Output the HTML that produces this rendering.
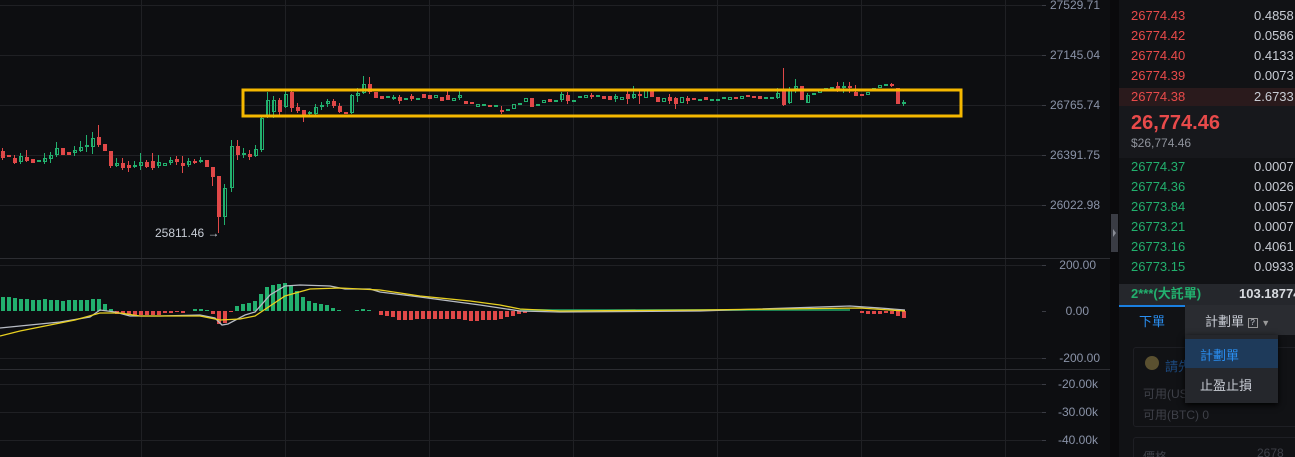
<!DOCTYPE html>
<html><head><meta charset="utf-8"><style>
*{margin:0;padding:0;box-sizing:border-box}
body{width:1295px;height:457px;overflow:hidden;background:#0d0e11;font-family:"Liberation Sans","Noto Sans CJK TC",sans-serif;position:relative}
.ax{position:absolute;left:1044px;width:56px;text-align:right;font-size:12px;color:#8a93a8;line-height:14px}
.ob{position:absolute;left:1119px;width:176px;background:#111215;top:0;height:457px;overflow:hidden}
.r{position:absolute;left:12px;font-size:13px;line-height:20px}
.q{position:absolute;left:135px;font-size:13px;line-height:20px;color:#c8ccd4}
.red{color:#e84a4a}.grn{color:#22b06e}
</style></head><body>
<svg width="1119" height="457" style="position:absolute;left:0;top:0">
<g stroke="#1f2024" stroke-width="1">
<path d="M141.5 0V457M285.5 0V457M429.5 0V457M573.5 0V457M717.5 0V457M861.5 0V457M1005.5 0V457"/>
<path d="M0 5.5H1042M0 55.5H1042M0 105.5H1042M0 155.5H1042M0 205.5H1042M0 265.5H1042M0 358.5H1042M0 384.5H1042M0 412.5H1042M0 440.5H1042"/>
</g>
<path d="M0 258.5H1110M0 369.5H1110" stroke="#2c2d32"/>
<g stroke="#3a3c44"><path d="M1042 5.5h4M1042 55.5h4M1042 105.5h4M1042 155.5h4M1042 205.5h4M1042 265.5h4M1042 311.5h4M1042 358.5h4M1042 384.5h4M1042 412.5h4M1042 440.5h4"/></g>
<g fill="#e04848">
<path d="M2.5 148V160M14.5 155V164M26.5 150V162M98.5 125V147M110.5 151V168M122.5 158V170M128.5 161V172M146.5 160V168M152.5 153V170M176.5 156V165M182.5 156V173M194.5 159V164M212.5 167V186M218.5 176V233M237.5 140V160M249.5 150V160M279.5 98V115M291.5 91V112M297.5 103V113M303.5 110V122M333.5 99V108M339.5 103V113M369.5 77V94M399.5 95V104M411.5 94V101M447.5 90V100M501.5 106V114M567.5 92V104M591.5 93V99M627.5 91V104M639.5 89V104M669.5 94V104M675.5 97V109M687.5 96V104M783.5 68V106M837.5 82V92M849.5 82V93M855.5 85V96M891.5 83V87" stroke="#e04848" stroke-width="1"/>
<rect x="1" y="151" width="4" height="7"/><rect x="7" y="155" width="4" height="2"/><rect x="13" y="158" width="4" height="5"/><rect x="25" y="157" width="4" height="4"/><rect x="31" y="159" width="4" height="4"/><rect x="61" y="148" width="4" height="7"/><rect x="67" y="152" width="4" height="3"/><rect x="97" y="137" width="4" height="8"/><rect x="103" y="144" width="4" height="7"/><rect x="109" y="151" width="4" height="15"/><rect x="121" y="163" width="4" height="5"/><rect x="127" y="165" width="4" height="3"/><rect x="145" y="162" width="4" height="5"/><rect x="151" y="161" width="4" height="7"/><rect x="175" y="159" width="4" height="3"/><rect x="181" y="163" width="4" height="3"/><rect x="193" y="161" width="4" height="2"/><rect x="205" y="160" width="4" height="7"/><rect x="211" y="167" width="4" height="10"/><rect x="217" y="176" width="4" height="41"/><rect x="236" y="146" width="4" height="9"/><rect x="248" y="154" width="4" height="3"/><rect x="278" y="100" width="4" height="12"/><rect x="290" y="92" width="4" height="16"/><rect x="296" y="107" width="4" height="4"/><rect x="302" y="110" width="4" height="5"/><rect x="332" y="101" width="4" height="5"/><rect x="338" y="106" width="4" height="6"/><rect x="344" y="112" width="4" height="2"/><rect x="368" y="84" width="4" height="8"/><rect x="374" y="92" width="4" height="6"/><rect x="380" y="96" width="4" height="3"/><rect x="398" y="97" width="4" height="4"/><rect x="410" y="96" width="4" height="3"/><rect x="422" y="94" width="4" height="4"/><rect x="428" y="95" width="4" height="4"/><rect x="440" y="97" width="4" height="4"/><rect x="446" y="95" width="4" height="5"/><rect x="464" y="101" width="4" height="3"/><rect x="470" y="102" width="4" height="2"/><rect x="488" y="105" width="4" height="2"/><rect x="500" y="110" width="4" height="2"/><rect x="530" y="98" width="4" height="9"/><rect x="548" y="99" width="4" height="3"/><rect x="566" y="95" width="4" height="6"/><rect x="590" y="95" width="4" height="2"/><rect x="602" y="96" width="4" height="3"/><rect x="608" y="96" width="4" height="4"/><rect x="626" y="94" width="4" height="5"/><rect x="638" y="94" width="4" height="2"/><rect x="650" y="90" width="4" height="7"/><rect x="656" y="97" width="4" height="5"/><rect x="668" y="97" width="4" height="4"/><rect x="674" y="98" width="4" height="6"/><rect x="686" y="98" width="4" height="3"/><rect x="692" y="98" width="4" height="2"/><rect x="704" y="97" width="4" height="3"/><rect x="734" y="97" width="4" height="2"/><rect x="746" y="95" width="4" height="2"/><rect x="752" y="96" width="4" height="2"/><rect x="758" y="96" width="4" height="3"/><rect x="782" y="91" width="4" height="14"/><rect x="800" y="86" width="4" height="14"/><rect x="836" y="86" width="4" height="3"/><rect x="848" y="86" width="4" height="2"/><rect x="854" y="92" width="4" height="4"/><rect x="860" y="94" width="4" height="2"/><rect x="890" y="84" width="4" height="2"/><rect x="896" y="88" width="4" height="16"/>
</g>
<g stroke="#22b06e" fill="none" stroke-width="1">
<path d="M20.5 153V164M44.5 153V164M50.5 152V163M56.5 142V157M74.5 146V156M80.5 141V152M86.5 135V152M92.5 132V154M116.5 158V167M134.5 161V168M140.5 153V170M158.5 155V168M170.5 157V165M188.5 158V167M200.5 157V163M224.5 184V225M231.5 140V192M243.5 148V158M255.5 145V157M261.5 116V152M267.5 92V118M273.5 96V118M285.5 91V108M309.5 111V117M315.5 104V117M321.5 102V110M327.5 99V107M351.5 94V114M357.5 88V102M363.5 76V94M393.5 95V100M459.5 90V100M561.5 92V102M615.5 94V102M633.5 86V99M777.5 88V99M789.5 87V104M795.5 79V93M807.5 93V103M843.5 82V93M903.5 100V106"/>
<rect x="19.5" y="156.5" width="3" height="5"/><rect x="37.5" y="160.5" width="3" height="1"/><rect x="43.5" y="158.5" width="3" height="3"/><rect x="49.5" y="155.5" width="3" height="3"/><rect x="55.5" y="148.5" width="3" height="6"/><rect x="73.5" y="150.5" width="3" height="2"/><rect x="79.5" y="147.5" width="3" height="3"/><rect x="85.5" y="145.5" width="3" height="1"/><rect x="91.5" y="138.5" width="3" height="8"/><rect x="115.5" y="163.5" width="3" height="2"/><rect x="133.5" y="165.5" width="3" height="1"/><rect x="139.5" y="162.5" width="3" height="3"/><rect x="157.5" y="162.5" width="3" height="3"/><rect x="163.5" y="163.5" width="3" height="2"/><rect x="169.5" y="160.5" width="3" height="2"/><rect x="187.5" y="161.5" width="3" height="3"/><rect x="199.5" y="160.5" width="3" height="1"/><rect x="223.5" y="188.5" width="3" height="28"/><rect x="230.5" y="146.5" width="3" height="41"/><rect x="242.5" y="153.5" width="3" height="1"/><rect x="254.5" y="149.5" width="3" height="6"/><rect x="260.5" y="118.5" width="3" height="31"/><rect x="266.5" y="100.5" width="3" height="16"/><rect x="272.5" y="100.5" width="3" height="11"/><rect x="284.5" y="94.5" width="3" height="12"/><rect x="308.5" y="112.5" width="3" height="1"/><rect x="314.5" y="107.5" width="3" height="6"/><rect x="320.5" y="105.5" width="3" height="1"/><rect x="326.5" y="101.5" width="3" height="2"/><rect x="350.5" y="95.5" width="3" height="17"/><rect x="356.5" y="93.5" width="3" height="2"/><rect x="362.5" y="84.5" width="3" height="8"/><rect x="386.5" y="96.5" width="3" height="1"/><rect x="392.5" y="97.5" width="3" height="1"/><rect x="404.5" y="98.5" width="3" height="1"/><rect x="416.5" y="98.5" width="3" height="1"/><rect x="434.5" y="95.5" width="3" height="2"/><rect x="452.5" y="98.5" width="3" height="2"/><rect x="458.5" y="95.5" width="3" height="2"/><rect x="476.5" y="104.5" width="3" height="2"/><rect x="482.5" y="104.5" width="3" height="1"/><rect x="494.5" y="105.5" width="3" height="1"/><rect x="506.5" y="109.5" width="3" height="1"/><rect x="512.5" y="104.5" width="3" height="4"/><rect x="518.5" y="103.5" width="3" height="1"/><rect x="524.5" y="98.5" width="3" height="3"/><rect x="536.5" y="104.5" width="3" height="1"/><rect x="542.5" y="100.5" width="3" height="2"/><rect x="554.5" y="100.5" width="3" height="1"/><rect x="560.5" y="94.5" width="3" height="5"/><rect x="572.5" y="100.5" width="3" height="1"/><rect x="578.5" y="96.5" width="3" height="1"/><rect x="584.5" y="95.5" width="3" height="2"/><rect x="596.5" y="95.5" width="3" height="1"/><rect x="614.5" y="96.5" width="3" height="2"/><rect x="620.5" y="97.5" width="3" height="2"/><rect x="632.5" y="94.5" width="3" height="3"/><rect x="644.5" y="90.5" width="3" height="7"/><rect x="662.5" y="98.5" width="3" height="3"/><rect x="680.5" y="97.5" width="3" height="5"/><rect x="698.5" y="99.5" width="3" height="1"/><rect x="710.5" y="99.5" width="3" height="1"/><rect x="716.5" y="99.5" width="3" height="1"/><rect x="722.5" y="97.5" width="3" height="1"/><rect x="728.5" y="97.5" width="3" height="2"/><rect x="740.5" y="96.5" width="3" height="2"/><rect x="764.5" y="97.5" width="3" height="1"/><rect x="770.5" y="97.5" width="3" height="1"/><rect x="776.5" y="93.5" width="3" height="4"/><rect x="788.5" y="90.5" width="3" height="12"/><rect x="794.5" y="86.5" width="3" height="2"/><rect x="806.5" y="95.5" width="3" height="7"/><rect x="812.5" y="93.5" width="3" height="1"/><rect x="818.5" y="90.5" width="3" height="2"/><rect x="824.5" y="88.5" width="3" height="2"/><rect x="830.5" y="87.5" width="3" height="1"/><rect x="842.5" y="86.5" width="3" height="1"/><rect x="866.5" y="92.5" width="3" height="2"/><rect x="872.5" y="88.5" width="3" height="2"/><rect x="878.5" y="85.5" width="3" height="2"/><rect x="884.5" y="84.5" width="3" height="1"/><rect x="902.5" y="102.5" width="3" height="1"/>
</g>
<rect x="243" y="90" width="718" height="26" fill="none" stroke="#f5b800" stroke-width="3"/>
<text x="155" y="237" font-size="12" fill="#c8cdd6" font-family="Liberation Sans">25811.46 →</text>
<g fill="#22b06e">
<rect x="1" y="297" width="4" height="14"/><rect x="7" y="297" width="4" height="14"/><rect x="13" y="298" width="4" height="13"/><rect x="19" y="299" width="4" height="12"/><rect x="25" y="299" width="4" height="12"/><rect x="31" y="300" width="4" height="11"/><rect x="37" y="300" width="4" height="11"/><rect x="43" y="299" width="4" height="12"/><rect x="49" y="300" width="4" height="11"/><rect x="55" y="300" width="4" height="11"/><rect x="61" y="301" width="4" height="10"/><rect x="67" y="300" width="4" height="11"/><rect x="73" y="300" width="4" height="11"/><rect x="79" y="300" width="4" height="11"/><rect x="85" y="300" width="4" height="11"/><rect x="91" y="299" width="4" height="12"/><rect x="97" y="299" width="4" height="12"/><rect x="103" y="304" width="4" height="7"/><rect x="109" y="309" width="4" height="2"/><rect x="193" y="309" width="4" height="2"/><rect x="199" y="309" width="4" height="2"/><rect x="205" y="310" width="4" height="1"/><rect x="235" y="306" width="4" height="5"/><rect x="241" y="304" width="4" height="7"/><rect x="247" y="303" width="4" height="8"/><rect x="253" y="301" width="4" height="10"/><rect x="259" y="294" width="4" height="17"/><rect x="265" y="287" width="4" height="24"/><rect x="271" y="285" width="4" height="26"/><rect x="277" y="284" width="4" height="27"/><rect x="283" y="283" width="4" height="28"/><rect x="289" y="286" width="4" height="25"/><rect x="295" y="291" width="4" height="20"/><rect x="301" y="297" width="4" height="14"/><rect x="307" y="301" width="4" height="10"/><rect x="313" y="303" width="4" height="8"/><rect x="319" y="304" width="4" height="7"/><rect x="325" y="305" width="4" height="6"/><rect x="331" y="308" width="4" height="3"/><rect x="337" y="310" width="4" height="1"/><rect x="355" y="310" width="4" height="1"/><rect x="361" y="309" width="4" height="2"/><rect x="367" y="310" width="4" height="1"/>
<rect x="520" y="309" width="330" height="2" opacity=".7"/>
</g>
<g fill="#e04848">
<rect x="115" y="311" width="4" height="3"/><rect x="121" y="311" width="4" height="3"/><rect x="127" y="311" width="4" height="3"/><rect x="133" y="311" width="4" height="4"/><rect x="139" y="311" width="4" height="4"/><rect x="145" y="311" width="4" height="4"/><rect x="151" y="311" width="4" height="4"/><rect x="157" y="311" width="4" height="4"/><rect x="163" y="311" width="4" height="2"/><rect x="169" y="311" width="4" height="2"/><rect x="175" y="311" width="4" height="1"/><rect x="181" y="311" width="4" height="2"/><rect x="211" y="311" width="4" height="3"/><rect x="217" y="311" width="4" height="13"/><rect x="223" y="311" width="4" height="12"/><rect x="229" y="311" width="4" height="1"/>
<rect x="379" y="311" width="4" height="4"/><rect x="385" y="311" width="4" height="5"/><rect x="391" y="311" width="4" height="6"/><rect x="397" y="311" width="4" height="9"/><rect x="403" y="311" width="4" height="9"/><rect x="409" y="311" width="4" height="9"/><rect x="415" y="311" width="4" height="8"/><rect x="421" y="311" width="4" height="8"/><rect x="427" y="311" width="4" height="8"/><rect x="433" y="311" width="4" height="8"/><rect x="439" y="311" width="4" height="8"/><rect x="445" y="311" width="4" height="8"/><rect x="451" y="311" width="4" height="8"/><rect x="457" y="311" width="4" height="8"/><rect x="463" y="311" width="4" height="9"/><rect x="469" y="311" width="4" height="10"/><rect x="475" y="311" width="4" height="10"/><rect x="481" y="311" width="4" height="9"/><rect x="487" y="311" width="4" height="9"/><rect x="493" y="311" width="4" height="9"/><rect x="499" y="311" width="4" height="8"/><rect x="505" y="311" width="4" height="6"/><rect x="511" y="311" width="4" height="5"/><rect x="517" y="311" width="4" height="3"/><rect x="523" y="311" width="4" height="2"/>
<rect x="860" y="311" width="4" height="2"/><rect x="866" y="311" width="4" height="3"/><rect x="872" y="311" width="4" height="3"/><rect x="878" y="311" width="4" height="3"/><rect x="884" y="311" width="4" height="2"/><rect x="890" y="311" width="4" height="3"/><rect x="896" y="311" width="4" height="5"/><rect x="902" y="311" width="4" height="7"/>
</g>
<polyline fill="none" stroke="#b8bcc4" stroke-width="1.3" points="0,328 20,326 60,322 90,317 100,310 115,312 130,316 160,316 200,315 215,318 222,325 228,324 245,315 255,312 270,295 285,286 300,285 330,286 345,289 370,289 380,292 420,297 450,301 480,305 500,308 520,311 560,312 700,311 850,306 880,308 905,310"/>
<polyline fill="none" stroke="#e8d020" stroke-width="1.3" points="0,336 20,331 75,320 100,313 120,313 140,316 200,316 220,320 240,319 255,316 285,296 310,289 340,288 380,290 420,296 470,301 500,305 520,309 560,311 700,310 860,308 905,311"/>
<rect x="1110" y="0" width="9" height="457" fill="#0a0a0c"/>
<rect x="1111" y="214" width="7" height="38" fill="#3a3c44"/>
<path d="M1113 229l3 4-3 4z" fill="#8a8d96"/>
</svg>
<div class="ax" style="top:-2px">27529.71</div>
<div class="ax" style="top:48px">27145.04</div>
<div class="ax" style="top:98px">26765.74</div>
<div class="ax" style="top:148px">26391.75</div>
<div class="ax" style="top:198px">26022.98</div>
<div class="ax" style="top:258px;width:52px">200.00</div>
<div class="ax" style="top:304px;width:45px">0.00</div>
<div class="ax" style="top:351px;width:56px">-200.00</div>
<div class="ax" style="top:377px;width:54px">-20.00k</div>
<div class="ax" style="top:405px;width:54px">-30.00k</div>
<div class="ax" style="top:433px;width:54px">-40.00k</div>
<div class="ob">
<div style="position:absolute;left:0;top:88px;width:176px;height:18px;background:#2a1a1c"></div>
<div class="r red" style="top:-14px">26774.44</div><div class="q" style="top:-14px">0.5631</div>
<div class="r red" style="top:6px">26774.43</div><div class="q" style="top:6px">0.4858</div>
<div class="r red" style="top:26px">26774.42</div><div class="q" style="top:26px">0.0586</div>
<div class="r red" style="top:46px">26774.40</div><div class="q" style="top:46px">0.4133</div>
<div class="r red" style="top:66px">26774.39</div><div class="q" style="top:66px">0.0073</div>
<div class="r red" style="top:87px">26774.38</div><div class="q" style="top:87px">2.6733</div>
<div style="position:absolute;left:0;top:106px;width:176px;height:52px;background:#17181c"></div>
<div style="position:absolute;left:12px;top:112px;font-size:20px;font-weight:bold;color:#e84a4a">26,774.46</div>
<div style="position:absolute;left:12px;top:136px;font-size:12px;color:#8f939c">$26,774.46</div>
<div class="r grn" style="top:157px">26774.37</div><div class="q" style="top:157px">0.0007</div>
<div class="r grn" style="top:177px">26774.36</div><div class="q" style="top:177px">0.0026</div>
<div class="r grn" style="top:197px">26773.84</div><div class="q" style="top:197px">0.0057</div>
<div class="r grn" style="top:217px">26773.21</div><div class="q" style="top:217px">0.0007</div>
<div class="r grn" style="top:237px">26773.16</div><div class="q" style="top:237px">0.4061</div>
<div class="r grn" style="top:257px">26773.15</div><div class="q" style="top:257px">0.0933</div>
<div style="position:absolute;left:0;top:284px;width:176px;height:21px;background:#25272c"></div>
<div class="r grn" style="top:284px;font-weight:bold">2***(大託單)</div>
<div class="q" style="top:284px;left:120px;font-weight:bold;color:#d8dbe0">103.18774</div>
<div style="position:absolute;left:0;top:305px;width:66px;height:2px;background:#1a7fe0"></div>
<div style="position:absolute;left:20px;top:311px;font-size:13px;color:#2a8ef0">下單</div>
<div style="position:absolute;left:66px;top:305px;width:110px;height:30px;background:#2a2c31"></div>
<div style="position:absolute;left:86px;top:311px;font-size:13px;color:#c8ccd4">計劃單 <span style="display:inline-block;width:10px;height:10px;border:1px solid #999;font-size:8px;line-height:8px;text-align:center;vertical-align:1px">?</span> <span style="font-size:9px;color:#999">▼</span></div>
<div style="position:absolute;left:14px;top:347px;width:170px;height:80px;border:1px solid #1e1f24;border-radius:3px"></div>
<div style="position:absolute;left:26px;top:356px;width:14px;height:14px;border-radius:50%;background:#5a5030"></div>
<div style="position:absolute;left:46px;top:356px;font-size:13px;color:#1c4a80">請先</div>
<div style="position:absolute;left:24px;top:385px;font-size:12px;color:#3e4048">可用(USDT)</div>
<div style="position:absolute;left:24px;top:406px;font-size:12px;color:#3e4048">可用(BTC) 0</div>
<div style="position:absolute;left:14px;top:437px;width:170px;height:30px;border:1px solid #1e1f24;border-radius:3px"></div>
<div style="position:absolute;left:24px;top:448px;font-size:12px;color:#3e4048">價格</div>
<div style="position:absolute;left:138px;top:446px;font-size:12px;color:#3e4048">2678</div>
<div style="position:absolute;left:66px;top:335px;width:93px;height:68px;background:#25272c;box-shadow:0 2px 6px #000"></div>
<div style="position:absolute;left:66px;top:339px;width:93px;height:29px;background:#1e3a5a"></div>
<div style="position:absolute;left:81px;top:345px;font-size:13px;color:#2a8ef0">計劃單</div>
<div style="position:absolute;left:81px;top:375px;font-size:13px;color:#c8ccd4">止盈止損</div>
</div>
</body></html>
